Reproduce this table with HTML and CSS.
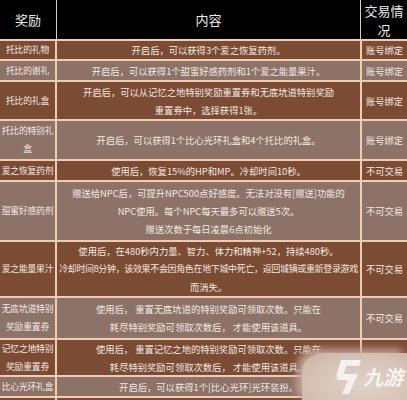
FILE: index.html
```html
<!DOCTYPE html>
<html lang="zh-CN">
<head>
<meta charset="utf-8">
<title>奖励表</title>
<link rel="stylesheet" href="styles.css">
</head>
<body>
<div class="page">
  <div class="table">
    <div class="head">
      <div class="hcell">奖励</div>
      <div class="hcell">内容</div>
      <div class="hcell">交易情<br>况</div>
    </div>

    <div class="cell name dark">托比的礼物</div>
    <div class="cell dark">开启后，可以获得3个爱之恢复药剂。</div>
    <div class="cell dark">账号绑定</div>

    <div class="cell name light">托比的谢礼</div>
    <div class="cell light">开启后，可以获得1个甜蜜好感药剂和1个爱之能量果汁。</div>
    <div class="cell light">账号绑定</div>

    <div class="cell name dark">托比的礼盒</div>
    <div class="cell dark"><span class="ln">开启后，可以从记忆之地特别奖励重置券和无底坑道特别奖励</span><span class="ln">重置券中，选择获得1张。</span></div>
    <div class="cell dark">账号绑定</div>

    <div class="cell name light"><span class="ln">托比的特别礼</span><span class="ln">盒</span></div>
    <div class="cell light">开启后，可以获得1个比心光环礼盒和4个托比的礼盒。</div>
    <div class="cell light">账号绑定</div>

    <div class="cell name dark">爱之恢复药剂</div>
    <div class="cell dark">使用后，恢复15%的HP和MP。冷却时间10秒。</div>
    <div class="cell dark">不可交易</div>

    <div class="cell name light">甜蜜好感药剂</div>
    <div class="cell light"><span class="ln">赠送给NPC后，可提升NPC500点好感度。无法对没有[赠送]功能的</span><span class="ln">NPC使用。每个NPC每天最多可以赠送5次。</span><span class="ln">赠送次数于每日凌晨6点初始化</span></div>
    <div class="cell light">不可交易</div>

    <div class="cell name dark">爱之能量果汁</div>
    <div class="cell dark"><span class="ln">使用后，在480秒内力量、智力、体力和精神+52，持续480秒。</span><span class="ln tight">冷却时间8分钟，该效果不会因角色在地下城中死亡，返回城镇或重新登录游戏</span><span class="ln">而消失。</span></div>
    <div class="cell dark">不可交易</div>

    <div class="cell name light"><span class="ln">无底坑道特别</span><span class="ln">奖励重置券</span></div>
    <div class="cell light"><span class="ln">使用后， 重置无底坑道的特别奖励可领取次数。只能在</span><span class="ln">耗尽特别奖励可领取次数后， 才能使用该道具。</span></div>
    <div class="cell light">不可交易</div>

    <div class="cell name dark"><span class="ln">记忆之地特别</span><span class="ln">奖励重置券</span></div>
    <div class="cell dark"><span class="ln">使用后， 重置记忆之地的特别奖励可领取次数。只能在</span><span class="ln">耗尽特别奖励可领取次数后， 才能使用该道具。</span></div>
    <div class="cell dark"></div>

    <div class="cell name light">比心光环礼盒</div>
    <div class="cell light">开启后，可以获得1个[比心光环]光环装扮。</div>
    <div class="cell light"></div>

    <div class="cell dark"></div>
    <div class="cell dark"></div>
    <div class="cell dark"></div>
  </div>

  <div class="logo">
    <svg class="logo-mark" width="28" height="34" viewBox="0 0 28 34">
      <polygon points="7,0 27,0 25,6 12,6 9,17 2,17" fill="#f4f1ef"/>
      <polygon points="4,14 24,14 15,34 8,34 14,20 3,20" fill="#f4f1ef"/>
    </svg>
    <span class="logo-text">九游</span>
  </div>
</div>
</body>
</html>
```

FILE: styles.css
```css
html, body {
  margin: 0;
  padding: 0;
}

body {
  width: 407px;
  height: 400px;
  overflow: hidden;
  background: #f0cdb2;
  font-family: "Noto Sans CJK SC", "Noto Sans", sans-serif;
}

.page {
  position: relative;
  width: 407px;
  height: 400px;
  overflow: hidden;
}

.table {
  display: grid;
  grid-template-columns: 55px 303px 1fr;
  grid-template-rows: 39px 18px 19px 37px 38px 19px 58px 54px 40px 35px 19px 20px;
  gap: 2px;
  background: #f0cdb2;
  width: 407px;
}

.head {
  grid-column: 1 / -1;
  display: grid;
  grid-template-columns: 56px 303px 1fr;
  column-gap: 1px;
  background: #cfcfcf;
}

.hcell {
  background: #000;
  color: #ececec;
  font-size: 13px;
  line-height: 19px;
  display: flex;
  align-items: center;
  justify-content: center;
  text-align: center;
}

.cell {
  display: flex;
  flex-direction: column;
  align-items: center;
  justify-content: center;
  text-align: center;
  color: #f4e9e3;
  font-size: 9.3px;
  line-height: 18px;
  white-space: nowrap;
}

.name {
  font-size: 8.8px;
  letter-spacing: -0.2px;
}

.dark {
  background: #7b4b33;
}

.light {
  background: #8d7268;
}

.ln {
  display: block;
  white-space: nowrap;
}

.tight {
  font-size: 9px;
  letter-spacing: -0.35px;
}

.logo {
  position: absolute;
  z-index: 2;
  left: 302px;
  top: 353px;
  width: 105px;
  height: 47px;
  box-sizing: border-box;
  padding: 7px 0 0 32px;
  display: flex;
  align-items: flex-start;
  gap: 3px;
  background-color: #d6c2b7;
  background-image: radial-gradient(ellipse at 60% 65%, #e2d2c9 0%, #d6c2b7 60%, #c9afa2 100%);
  border-top-left-radius: 24px 18px;
  box-shadow: -5px -4px 9px 0 #c4a89a;
}

.logo-text {
  color: #f7f4f2;
  font-size: 20px;
  font-weight: 700;
  transform: skewX(-12deg);
  line-height: 24px;
  margin-top: 5px;
}
```
